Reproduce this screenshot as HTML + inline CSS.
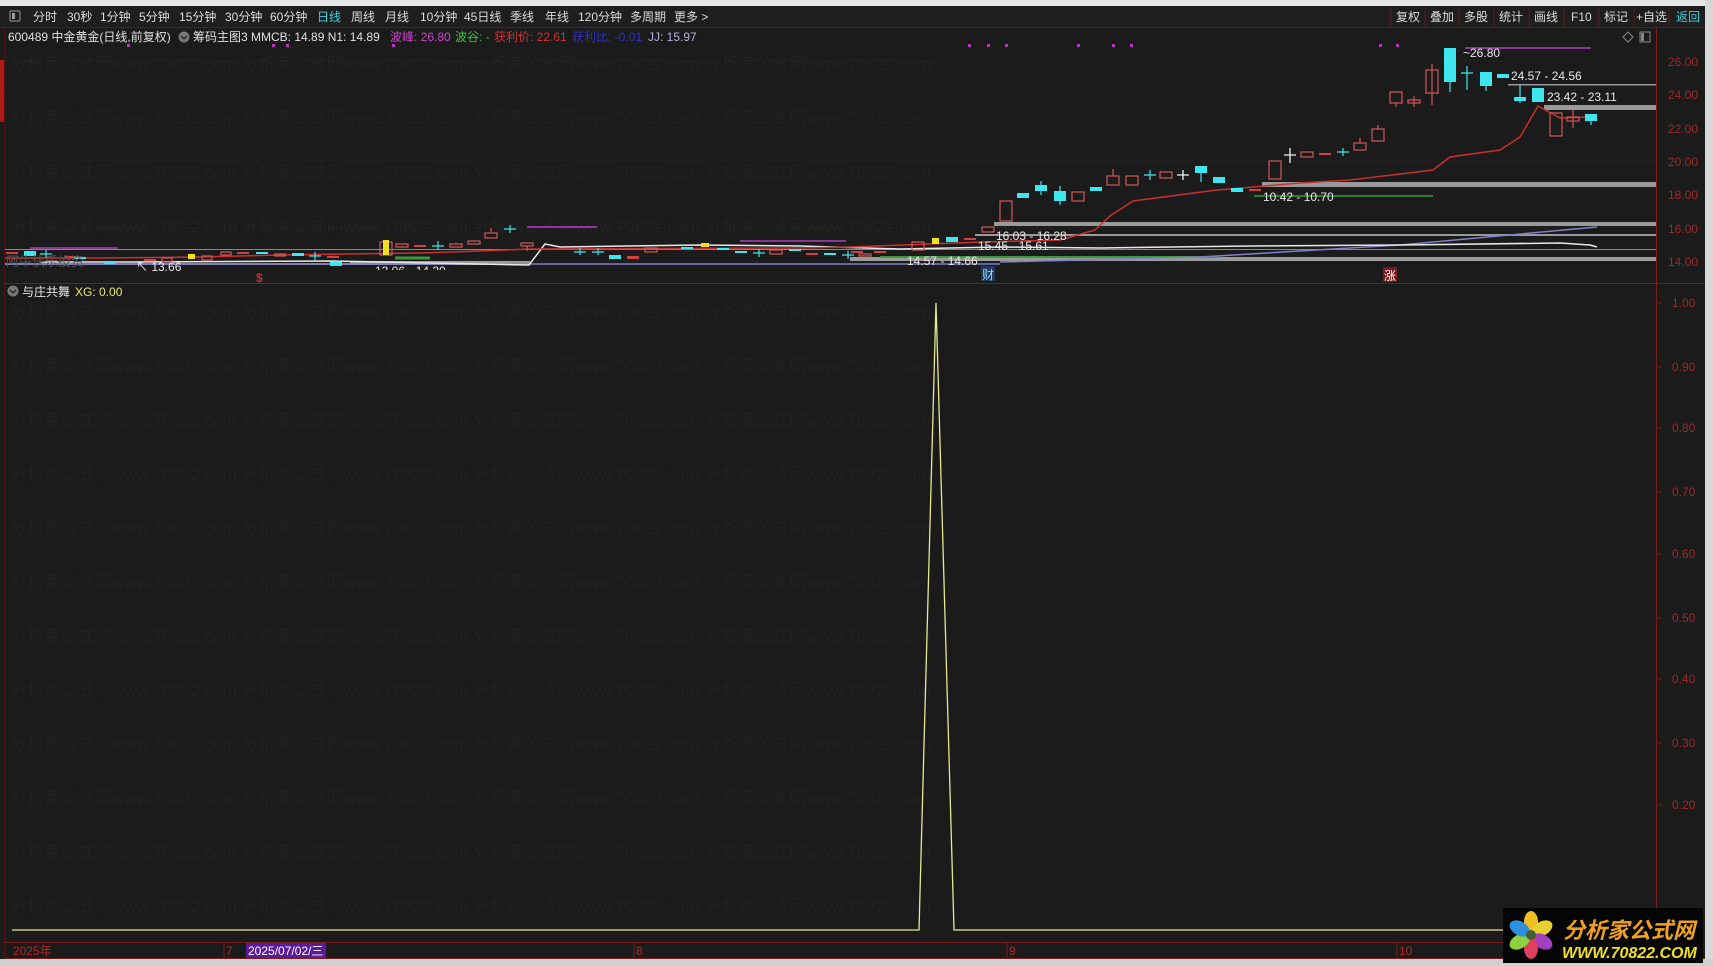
<!DOCTYPE html>
<html><head><meta charset="utf-8"><style>
html,body{margin:0;padding:0;background:#1b1b1b;width:1713px;height:966px;overflow:hidden}
svg{display:block}
text{font-family:"Liberation Sans","Noto Sans CJK SC",sans-serif}
</style></head><body>
<svg width="1713" height="966" viewBox="0 0 1713 966" xmlns="http://www.w3.org/2000/svg">
<rect x="0" y="0" width="1713" height="966" fill="#1b1b1b"/>
<rect x="0" y="0" width="1713" height="6" fill="#e6e6e6"/>
<rect x="1705" y="0" width="8" height="966" fill="#d8d8d8"/>
<rect x="0" y="959" width="1713" height="7" fill="#cfcfcf"/>
<rect x="0" y="6" width="1705" height="22" fill="#1e1e1e"/>
<line x1="0" y1="27.5" x2="1705" y2="27.5" stroke="#5a1c1c"/>
<rect x="10" y="11" width="10" height="10" fill="none" stroke="#999" rx="1"/><rect x="12" y="13" width="3" height="6" fill="#999"/>
<g font-size="12" fill="#dcdcdc">
<text x="33" y="21">分时</text><text x="67" y="21">30秒</text><text x="100" y="21">1分钟</text><text x="139" y="21">5分钟</text><text x="179" y="21">15分钟</text><text x="225" y="21">30分钟</text><text x="270" y="21">60分钟</text><text x="317" y="21" fill="#3ed0e0">日线</text><text x="351" y="21">周线</text><text x="385" y="21">月线</text><text x="420" y="21">10分钟</text><text x="464" y="21">45日线</text><text x="510" y="21">季线</text><text x="545" y="21">年线</text><text x="578" y="21">120分钟</text><text x="630" y="21">多周期</text><text x="674" y="21">更多 &gt;</text>
<text x="1396" y="21">复权</text><text x="1430" y="21">叠加</text><text x="1464" y="21">多股</text><text x="1499" y="21">统计</text><text x="1534" y="21">画线</text><text x="1571" y="21">F10</text><text x="1604" y="21">标记</text><text x="1636" y="21">+自选</text><text x="1676" y="21" fill="#3ed0e0">返回</text>
</g>
<g stroke="#5a1c1c"><line x1="1391" y1="8" x2="1391" y2="27"/><line x1="1425" y1="8" x2="1425" y2="27"/><line x1="1459" y1="8" x2="1459" y2="27"/><line x1="1494" y1="8" x2="1494" y2="27"/><line x1="1529" y1="8" x2="1529" y2="27"/><line x1="1564" y1="8" x2="1564" y2="27"/><line x1="1599" y1="8" x2="1599" y2="27"/><line x1="1634" y1="8" x2="1634" y2="27"/><line x1="1669" y1="8" x2="1669" y2="27"/></g>
<rect x="0" y="60" width="4" height="62" fill="#b01818"/>
<line x1="1656.5" y1="28" x2="1656.5" y2="958" stroke="#7a1c1c"/>
<line x1="4" y1="283.5" x2="1705" y2="283.5" stroke="#7a1c1c"/>
<line x1="4.5" y1="28" x2="4.5" y2="958" stroke="#4a1818"/>
<g font-size="17" fill="#212121">
<text x="10" y="70">分析家公式网www.70822.com 分析家公式网www.70822.com 分析家公式网www.70822.com 分析家公式网www.70822.com</text>
<text x="10" y="124">分析家公式网www.70822.com 分析家公式网www.70822.com 分析家公式网www.70822.com 分析家公式网www.70822.com</text>
<text x="10" y="178">分析家公式网www.70822.com 分析家公式网www.70822.com 分析家公式网www.70822.com 分析家公式网www.70822.com</text>
<text x="10" y="232">分析家公式网www.70822.com 分析家公式网www.70822.com 分析家公式网www.70822.com 分析家公式网www.70822.com</text>
<text x="10" y="318">分析家公式网www.70822.com 分析家公式网www.70822.com 分析家公式网www.70822.com 分析家公式网www.70822.com</text>
<text x="10" y="372">分析家公式网www.70822.com 分析家公式网www.70822.com 分析家公式网www.70822.com 分析家公式网www.70822.com</text>
<text x="10" y="426">分析家公式网www.70822.com 分析家公式网www.70822.com 分析家公式网www.70822.com 分析家公式网www.70822.com</text>
<text x="10" y="480">分析家公式网www.70822.com 分析家公式网www.70822.com 分析家公式网www.70822.com 分析家公式网www.70822.com</text>
<text x="10" y="534">分析家公式网www.70822.com 分析家公式网www.70822.com 分析家公式网www.70822.com 分析家公式网www.70822.com</text>
<text x="10" y="588">分析家公式网www.70822.com 分析家公式网www.70822.com 分析家公式网www.70822.com 分析家公式网www.70822.com</text>
<text x="10" y="642">分析家公式网www.70822.com 分析家公式网www.70822.com 分析家公式网www.70822.com 分析家公式网www.70822.com</text>
<text x="10" y="696">分析家公式网www.70822.com 分析家公式网www.70822.com 分析家公式网www.70822.com 分析家公式网www.70822.com</text>
<text x="10" y="750">分析家公式网www.70822.com 分析家公式网www.70822.com 分析家公式网www.70822.com 分析家公式网www.70822.com</text>
<text x="10" y="804">分析家公式网www.70822.com 分析家公式网www.70822.com 分析家公式网www.70822.com 分析家公式网www.70822.com</text>
<text x="10" y="858">分析家公式网www.70822.com 分析家公式网www.70822.com 分析家公式网www.70822.com 分析家公式网www.70822.com</text>
<text x="10" y="912">分析家公式网www.70822.com 分析家公式网www.70822.com 分析家公式网www.70822.com 分析家公式网www.70822.com</text>
</g>
<g font-size="12">
<text x="8" y="41" fill="#e0e0e0">600489 中金黄金(日线,前复权)</text>
<circle cx="184" cy="37" r="5.5" fill="#777"/><path d="M181 36 L184 39 L187 36" stroke="#222" fill="none" stroke-width="1.3"/>
<text x="193" y="41" fill="#e0e0e0">筹码主图3 MMCB: 14.89  N1: 14.89</text>
<text x="390" y="41" fill="#d040d0">波峰: 26.80</text>
<text x="455" y="41" fill="#40c040">波谷: -</text>
<text x="494" y="41" fill="#d03030">获利价: 22.61</text>
<text x="572" y="41" fill="#3030c8">获利比: -0.01</text>
<text x="648" y="41" fill="#b0b0e0">JJ: 15.97</text>
</g>
<path d="M1628 32 L1633 37 L1628 42 L1623 37 Z" fill="none" stroke="#888"/>
<rect x="1640" y="32" width="10" height="10" fill="none" stroke="#888"/><rect x="1641" y="33" width="3" height="8" fill="#888"/>
<g stroke="#5a2020" stroke-dasharray="1,3">
<line x1="5" y1="61" x2="1656" y2="61"/><line x1="5" y1="94" x2="1656" y2="94"/><line x1="5" y1="128" x2="1656" y2="128"/><line x1="5" y1="161" x2="1656" y2="161"/><line x1="5" y1="194" x2="1656" y2="194"/><line x1="5" y1="228" x2="1656" y2="228"/><line x1="5" y1="261" x2="1656" y2="261"/>
</g>
<g font-size="12" fill="#a02828">
<text x="1668" y="66">26.00</text><text x="1668" y="99">24.00</text><text x="1668" y="133">22.00</text><text x="1668" y="166">20.00</text><text x="1668" y="199">18.00</text><text x="1668" y="233">16.00</text><text x="1668" y="266">14.00</text>
<text x="1672" y="307">1.00</text><text x="1672" y="371">0.90</text><text x="1672" y="432">0.80</text><text x="1672" y="496">0.70</text><text x="1672" y="558">0.60</text><text x="1672" y="622">0.50</text><text x="1672" y="683">0.40</text><text x="1672" y="747">0.30</text><text x="1672" y="809">0.20</text>
</g>
<g stroke="#7a1c1c"><line x1="1656" y1="303" x2="1661" y2="303"/><line x1="1656" y1="367" x2="1661" y2="367"/><line x1="1656" y1="428" x2="1661" y2="428"/><line x1="1656" y1="492" x2="1661" y2="492"/><line x1="1656" y1="554" x2="1661" y2="554"/><line x1="1656" y1="618" x2="1661" y2="618"/><line x1="1656" y1="679" x2="1661" y2="679"/><line x1="1656" y1="743" x2="1661" y2="743"/><line x1="1656" y1="805" x2="1661" y2="805"/></g>
<g fill="#9a9a9a">
<rect x="1262" y="182" width="394" height="5"/>
<rect x="994" y="222" width="662" height="4"/>
<rect x="975" y="234" width="681" height="2"/>
<rect x="5" y="249" width="1651" height="1" fill="#888"/>
<rect x="850" y="257" width="806" height="4"/>
<rect x="1508" y="84" width="148" height="1.5"/>
<rect x="1544" y="105" width="112" height="5"/>
<rect x="350" y="261" width="180" height="4"/>
<rect x="5" y="263" width="345" height="2" fill="#777"/>
</g>
<g stroke-width="1.5" fill="none">
<line x1="1254" y1="196" x2="1433" y2="196" stroke="#3a9a3a"/>
<line x1="880" y1="257" x2="1218" y2="257" stroke="#3a9a3a" stroke-width="2"/>
<line x1="395" y1="258" x2="430" y2="258" stroke="#3a9a3a" stroke-width="3"/>
<line x1="1465" y1="48" x2="1591" y2="48" stroke="#b040c0"/>
<line x1="527" y1="227" x2="597" y2="227" stroke="#b040c0"/>
<line x1="740" y1="241" x2="846" y2="241" stroke="#b040c0"/>
<line x1="30" y1="248" x2="118" y2="248" stroke="#b040c0"/>
<line x1="5" y1="264" x2="1000" y2="264" stroke="#8080c8" stroke-width="1.5"/>
<path d="M1000 262 L1200 257 L1400 245 L1597 227" stroke="#8080c8"/>
<path d="M40 262 L130 262 L330 261 L529 265 L545 244 L560 247 L700 245 L800 246 L900 249 L1000 247 L1100 248 L1250 246 L1400 245 L1560 243 L1590 245 L1597 247" stroke="#e8e8e8"/>
<path d="M5 258 L100 258 L200 257 L280 255 L420 253 L480 251 L530 249 L800 248 L850 247 L983 242 L1060 240 L1095 230 L1110 216 L1133 201 L1217 190 L1300 183 L1350 180 L1433 170 L1450 157 L1500 150 L1520 137 L1538 106 L1560 118 L1591 117" stroke="#c83030"/>
</g>
<g fill="#c030c0"><rect x="127" y="44" width="3" height="3"/><rect x="272" y="44" width="3" height="3"/><rect x="286" y="44" width="3" height="3"/><rect x="392" y="44" width="3" height="3"/><rect x="968" y="44" width="3" height="3"/><rect x="987" y="44" width="3" height="3"/><rect x="1005" y="44" width="3" height="3"/><rect x="1077" y="44" width="3" height="3"/><rect x="1112" y="44" width="3" height="3"/><rect x="1130" y="44" width="3" height="3"/><rect x="1379" y="44" width="3" height="3"/><rect x="1396" y="44" width="3" height="3"/></g>
<g fill="none" stroke="#d05858" stroke-width="1.2">
<rect x="162" y="258" width="10" height="4"/><rect x="202" y="256" width="10" height="4"/><rect x="221" y="252" width="10" height="3"/><rect x="275" y="254" width="10" height="2"/>
<rect x="380" y="242" width="12" height="13"/><rect x="396" y="244" width="12" height="3"/><rect x="450" y="244" width="12" height="3"/><rect x="468" y="241" width="12" height="3"/><rect x="485" y="233" width="12" height="5"/><line x1="491" y1="228" x2="491" y2="233"/><rect x="521" y="243" width="12" height="3"/><line x1="527" y1="246" x2="527" y2="251"/>
<rect x="645" y="248" width="12" height="4"/><rect x="770" y="250" width="12" height="4"/><rect x="859" y="254" width="12" height="2"/>
<rect x="912" y="242" width="12" height="8"/><rect x="982" y="227" width="12" height="5"/><rect x="1000" y="201" width="12" height="20"/>
<rect x="1072" y="192" width="12" height="9"/><rect x="1107" y="176" width="12" height="9"/><line x1="1113" y1="169" x2="1113" y2="176"/><rect x="1126" y="176" width="12" height="9"/><rect x="1160" y="172" width="12" height="6"/>
<rect x="1269" y="161" width="12" height="18"/><rect x="1301" y="152" width="12" height="5"/><rect x="1354" y="143" width="12" height="7"/><line x1="1360" y1="138" x2="1360" y2="143"/><rect x="1372" y="129" width="12" height="12"/><line x1="1378" y1="125" x2="1378" y2="129"/>
<rect x="1390" y="92" width="12" height="11"/><line x1="1396" y1="103" x2="1396" y2="107"/><rect x="1408" y="100" width="12" height="3"/><line x1="1414" y1="96" x2="1414" y2="107"/><rect x="1426" y="70" width="12" height="23"/><line x1="1432" y1="64" x2="1432" y2="105"/>
<rect x="1550" y="113" width="12" height="23"/><rect x="1567" y="117" width="12" height="4"/><line x1="1573" y1="110" x2="1573" y2="128"/>
</g>
<g fill="#d04040">
<rect x="6" y="252" width="12" height="2"/><rect x="64" y="256" width="12" height="2"/><rect x="144" y="259" width="12" height="2"/><rect x="237" y="252" width="12" height="2"/><rect x="327" y="256" width="12" height="2"/><rect x="414" y="245" width="12" height="2"/><rect x="627" y="256" width="12" height="3"/><rect x="806" y="253" width="12" height="2"/><rect x="851" y="251" width="12" height="2"/><rect x="874" y="251" width="12" height="2"/><rect x="964" y="238" width="12" height="2"/><rect x="1249" y="189" width="12" height="2"/><rect x="1319" y="153" width="12" height="2"/>
</g>
<g fill="#3ee6f0">
<rect x="24" y="251" width="12" height="5"/><rect x="74" y="257" width="12" height="2"/><rect x="104" y="262" width="12" height="2"/><rect x="256" y="252" width="12" height="2"/><rect x="292" y="253" width="12" height="3"/><rect x="330" y="262" width="12" height="4"/>
<rect x="609" y="255" width="12" height="4"/><rect x="681" y="247" width="12" height="2"/><rect x="717" y="248" width="12" height="2"/><rect x="735" y="251" width="12" height="2"/><rect x="789" y="249" width="12" height="2"/><rect x="824" y="253" width="12" height="2"/>
<rect x="946" y="237" width="12" height="5"/><rect x="1017" y="193" width="12" height="5"/><rect x="1035" y="185" width="12" height="6"/><rect x="1054" y="191" width="12" height="10"/><rect x="1090" y="187" width="12" height="4"/><rect x="1195" y="166" width="12" height="7"/><rect x="1213" y="177" width="12" height="6"/><rect x="1231" y="188" width="12" height="4"/>
<rect x="1444" y="48" width="12" height="34"/><rect x="1480" y="72" width="12" height="14"/><rect x="1497" y="74" width="12" height="4"/><rect x="1514" y="97" width="12" height="4"/><rect x="1532" y="88" width="12" height="14"/><rect x="1585" y="114" width="12" height="7"/>
</g>
<g stroke="#3ee6f0" stroke-width="1.2">
<line x1="1041" y1="181" x2="1041" y2="195"/><line x1="1060" y1="186" x2="1060" y2="205"/><line x1="1201" y1="173" x2="1201" y2="182"/><line x1="1450" y1="82" x2="1450" y2="92"/><line x1="1486" y1="86" x2="1486" y2="91"/><line x1="1520" y1="85" x2="1520" y2="103"/><line x1="1591" y1="121" x2="1591" y2="125"/>
<path d="M40 254 H52 M46 250 V258 M309 256 H321 M315 252 V260 M432 246 H444 M438 241 V250 M504 229 H516 M510 225 V233 M574 252 H586 M580 248 V255 M592 252 H604 M598 248 V255 M753 253 H765 M759 249 V257 M842 255 H854 M848 251 V259 M1144 175 H1156 M1150 170 V180 M1337 152 H1349 M1343 148 V156 M1461 73 H1473 M1467 66 V90"/>
</g>
<g fill="#f0e020"><rect x="188" y="254" width="7" height="5"/><rect x="383" y="240" width="6" height="15"/><rect x="701" y="243" width="8" height="4"/><rect x="932" y="238" width="7" height="6"/></g>
<g stroke="#f0f0f0" stroke-width="1.3"><path d="M1177 175 H1189 M1183 170 V180 M1284 155 H1296 M1290 148 V163"/></g>
<g font-size="12" fill="#e8e8e8">
<text x="1463" y="57">~26.80</text>
<text x="1511" y="80">24.57 - 24.56</text>
<text x="1547" y="101">23.42 - 23.11</text>
<text x="1263" y="201">10.42 - 10.70</text>
<text x="996" y="240">16.03 - 16.28</text>
<text x="978" y="250">15.45 - 15.61</text>
<text x="907" y="265">14.57 - 14.66</text>
<text x="136" y="271">↖ 13.66</text>
</g>
<svg x="0" y="262" width="600" height="8" overflow="hidden"><text x="375" y="13" font-size="12" fill="#e8e8e8">13.06 - 14.20</text></svg>
<text x="6" y="266" font-size="13" fill="#555">阿牛快乐投资</text>
<rect x="981" y="266" width="14" height="15" fill="#1e3a5a"/><text x="982" y="279" font-size="12" fill="#9ad0ff">财</text>
<rect x="1383" y="267" width="14" height="15" fill="#7a1818"/><text x="1384" y="280" font-size="12" fill="#fff">涨</text>
<text x="256" y="282" font-size="12" fill="#c83030" font-weight="bold">$</text>
<circle cx="13" cy="291" r="5.5" fill="#777"/><path d="M10 290 L13 293 L16 290" stroke="#222" fill="none" stroke-width="1.3"/>
<text x="22" y="296" font-size="12" fill="#e8e8e8">与庄共舞</text>
<text x="75" y="296" font-size="12" fill="#e8e870">XG: 0.00</text>
<path d="M12 930 L919 930 L936 303 L954 930 L1505 930" fill="none" stroke="#e8e890" stroke-width="1.3"/>
<rect x="5" y="942" width="1700" height="17" fill="#1b1b1b"/>
<line x1="5" y1="942.5" x2="1656" y2="942.5" stroke="#7a1c1c"/>
<line x1="5" y1="958.5" x2="1705" y2="958.5" stroke="#7a1c1c"/>
<g stroke="#7a1c1c"><line x1="224" y1="943" x2="224" y2="958"/><line x1="634" y1="943" x2="634" y2="958"/><line x1="1007" y1="943" x2="1007" y2="958"/><line x1="1397" y1="943" x2="1397" y2="958"/></g>
<g font-size="12" fill="#b02828"><text x="13" y="955">2025年</text><text x="226" y="955">7</text><text x="636" y="955">8</text><text x="1009" y="955">9</text><text x="1399" y="955">10</text></g>
<rect x="246" y="943" width="80" height="15" fill="#5a1a9a"/><text x="248" y="955" font-size="12" fill="#fff">2025/07/02/三</text>
<rect x="1503" y="908" width="200" height="55" fill="#050505"/>
<g transform="translate(1531,935)">
<ellipse cx="0" cy="-13" rx="7" ry="11" fill="#f0c020"/>
<ellipse cx="0" cy="-13" rx="7" ry="11" fill="#e8d030" transform="rotate(60)"/>
<ellipse cx="0" cy="-13" rx="7" ry="11" fill="#a040c0" transform="rotate(120)"/>
<ellipse cx="0" cy="-13" rx="7" ry="11" fill="#e04060" transform="rotate(180)"/>
<ellipse cx="0" cy="-13" rx="7" ry="11" fill="#90d040" transform="rotate(240)"/>
<ellipse cx="0" cy="-13" rx="7" ry="11" fill="#3090e0" transform="rotate(300)"/>
<circle r="5" fill="#406030"/>
</g>
<text x="1563" y="938" font-size="22" font-weight="bold" font-style="italic" fill="#f0a020">分析家公式网</text>
<text x="1562" y="958" font-size="16" font-weight="bold" font-style="italic" fill="#f0e020">WWW.70822.COM</text>
</svg>
</body></html>
